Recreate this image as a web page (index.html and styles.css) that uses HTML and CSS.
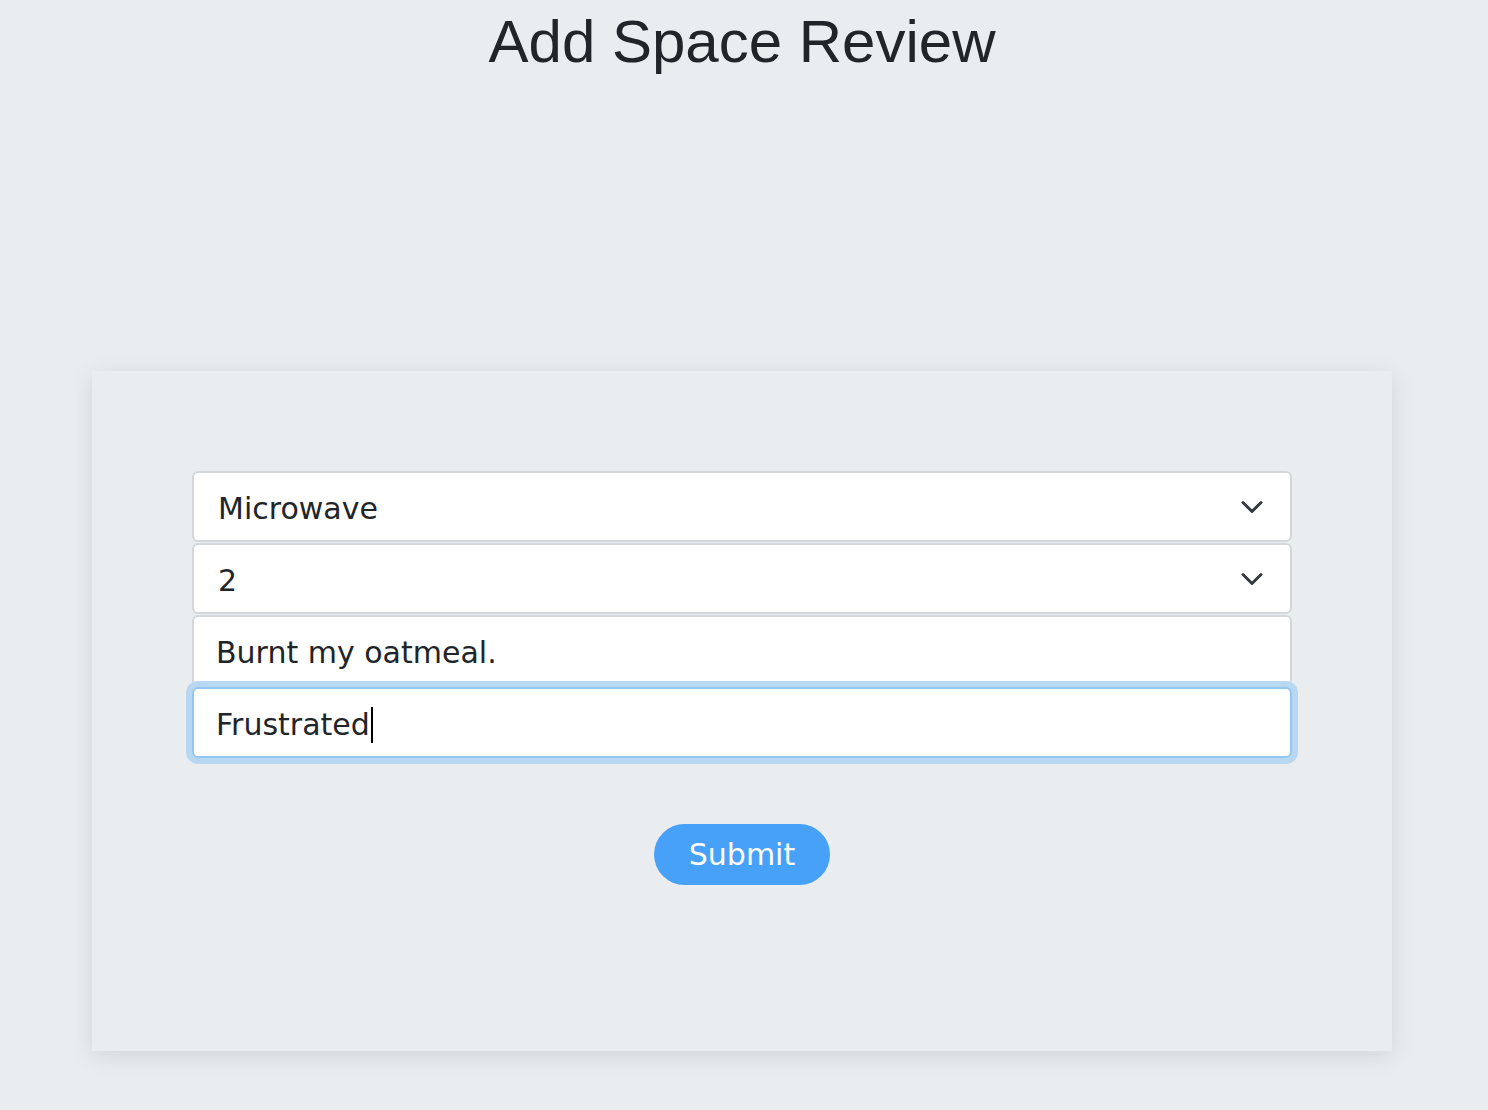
FILE: index.html
```html
<!DOCTYPE html>
<html lang="en">
<head>
<meta charset="utf-8">
<title>Add Space Review</title>
<link rel="stylesheet" href="styles.css">
</head>
<body>
<div class="page">
  <h1 class="title">Add Space Review</h1>
  <div class="card">
    <form class="review-form">
      <div class="fields">
        <div class="select-wrap">
          <select class="field field-select">
            <option>Microwave</option>
          </select>
          <svg class="chevron" viewBox="0 0 16 16" width="24" height="24" aria-hidden="true"><path d="M2 5l6 6 6-6" fill="none" stroke="#343a40" stroke-width="2" stroke-linecap="round" stroke-linejoin="round"/></svg>
        </div>
        <div class="select-wrap">
          <select class="field field-select">
            <option>2</option>
          </select>
          <svg class="chevron" viewBox="0 0 16 16" width="24" height="24" aria-hidden="true"><path d="M2 5l6 6 6-6" fill="none" stroke="#343a40" stroke-width="2" stroke-linecap="round" stroke-linejoin="round"/></svg>
        </div>
        <input class="field field-text" type="text" value="Burnt my oatmeal.">
        <div class="input-wrap">
          <input class="field field-text is-focused" type="text" value="Frustrated">
          <span class="caret-mirror"><span class="mirror-text">Frustrated</span></span>
        </div>
      </div>
      <div class="actions">
        <button type="button" class="submit-btn">Submit</button>
      </div>
    </form>
  </div>
</div>
</body>
</html>
```
FILE: styles.css
```css
html, body {
  margin: 0;
  padding: 0;
  background: #e9edf0;
}

body {
  font-family: "DejaVu Sans", Verdana, sans-serif;
  color: #212529;
}

.page {
  width: 1484px;
  min-height: 1110px;
  box-sizing: border-box;
  padding-bottom: 59px;
  display: flex;
  flex-direction: column;
  align-items: center;
}

.title {
  margin: 6px 0 0;
  font-family: "Liberation Sans", Arial, sans-serif;
  font-weight: 400;
  font-size: 60px;
  line-height: 72px;
  color: #212529;
}

.card {
  margin-top: 293px;
  width: 1300px;
  height: 680px;
  flex-shrink: 0;
  box-sizing: border-box;
  padding: 100px;
  background: #e9edf0;
  box-shadow: 0 5px 22px rgba(0, 0, 0, 0.1);
}

.review-form {
  display: flex;
  flex-direction: column;
}

.fields {
  display: flex;
  flex-direction: column;
  gap: 1px;
}

.field {
  display: block;
  width: 100%;
  height: 71px;
  box-sizing: border-box;
  margin: 0;
  border: 2px solid #d3d7db;
  border-radius: 6px;
  background: #ffffff;
  font-family: "DejaVu Sans", Verdana, sans-serif;
  font-size: 30px;
  color: #212529;
  outline: none;
}

.field-select {
  -webkit-appearance: none;
  appearance: none;
  padding: 4px 60px 0 24px;
}

.field-text {
  padding: 4px 22px 0 22px;
}

.select-wrap,
.input-wrap {
  position: relative;
}

.input-wrap {
  z-index: 1;
}

.chevron {
  position: absolute;
  right: 28px;
  top: 50%;
  margin-top: -12px;
  pointer-events: none;
}

.is-focused {
  border-color: #93c7f3;
  box-shadow: 0 0 0 6px #b8d8f2;
}

.caret-mirror {
  position: absolute;
  left: 24px;
  top: 0;
  height: 71px;
  display: flex;
  align-items: center;
  padding-top: 4px;
  box-sizing: border-box;
  font-family: "DejaVu Sans", Verdana, sans-serif;
  font-size: 30px;
  pointer-events: none;
}

.mirror-text {
  visibility: hidden;
  line-height: 36px;
  display: inline-block;
  position: relative;
}

.mirror-text::after {
  content: "";
  visibility: visible;
  position: absolute;
  right: -3px;
  top: 0;
  width: 2px;
  height: 36px;
  background: #000;
}

.actions {
  display: flex;
  justify-content: center;
  margin-top: 66px;
}

.submit-btn {
  width: 176px;
  height: 61px;
  border: none;
  border-radius: 31px;
  background: #48a1f8;
  color: #ffffff;
  font-family: "DejaVu Sans", Verdana, sans-serif;
  font-size: 30px;
  padding: 0;
  cursor: pointer;
}
```
